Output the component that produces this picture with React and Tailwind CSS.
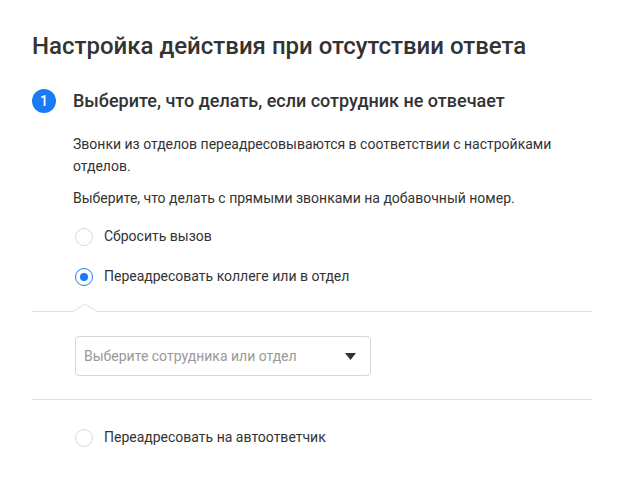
import React, { useState } from 'react';

const Radio = ({ checked, label, onClick }) => (
  <label className="flex items-center gap-[11px] cursor-pointer" onClick={onClick}>
    <span
      className={
        'flex items-center justify-center w-[18px] h-[18px] rounded-full border bg-white ' +
        (checked ? 'border-[#1a7cf5]' : 'border-[#d9d9d9]')
      }
    >
      {checked && <span className="w-[8px] h-[8px] rounded-full bg-[#1a7cf5]" />}
    </span>
    <span className="text-[14px] text-[#333]">{label}</span>
  </label>
);

const App = () => {
  const [choice, setChoice] = useState('forward');

  return (
    <div className="min-h-screen bg-white px-8 pt-[30px] font-['Roboto',sans-serif] text-[#333]">
      <h1 className="text-[24px] leading-[32px] font-medium text-[#333]">Настройка действия при отсутствии ответа</h1>

      <div className="mt-[27px] flex items-center gap-[17px]">
        <span className="flex items-center justify-center w-6 h-6 rounded-full bg-[#1a7cf5] text-white text-[14px] font-medium">
          1
        </span>
        <h2 className="text-[18px] leading-[24px] font-medium text-[#333]">
          Выберите, что делать, если сотрудник не отвечает
        </h2>
      </div>

      <div className="pl-[41px] mt-[20px] text-[14px] leading-[22px] text-[#333]">
        <p className="pr-10">Звонки из отделов переадресовываются в соответствии с настройками отделов.</p>
        <p className="mt-[10px]">Выберите, что делать с прямыми звонками на добавочный номер.</p>
      </div>

      <div className="pl-[43px] mt-[17px] flex flex-col gap-[19px]">
        <Radio checked={choice === 'drop'} label="Сбросить вызов" onClick={() => setChoice('drop')} />
        <Radio checked={choice === 'forward'} label="Переадресовать коллеге или в отдел" onClick={() => setChoice('forward')} />
      </div>

      <div className="relative mt-[24px] w-[560px] border-t border-[#ddd]">
        <svg className="absolute left-[40px] top-[-9px]" width="26" height="10" viewBox="0 0 26 10">
          <path d="M0 9 L13 1 L26 9 Z" fill="#fff" />
          <path d="M0 9 L13 1 L26 9" fill="none" stroke="#ddd" strokeWidth="1" />
        </svg>
      </div>

      <div className="pl-[43px] pt-[24px] pb-[23px]">
        <div className="w-[296px] h-[40px] border border-[#d6d6d6] rounded-[4px] flex items-center justify-between pl-[8px] pr-[14px]">
          <span className="text-[14px] text-[#999]">Выберите сотрудника или отдел</span>
          <svg width="11" height="7" viewBox="0 0 11 7">
            <path d="M0 0 L11 0 L5.5 7 Z" fill="#333" />
          </svg>
        </div>
      </div>

      <div className="w-[560px] border-t border-[#ddd]" />

      <div className="pl-[43px] pt-[27px]">
        <Radio checked={choice === 'auto'} label="Переадресовать на автоответчик" onClick={() => setChoice('auto')} />
      </div>
    </div>
  );
};

export default App;
